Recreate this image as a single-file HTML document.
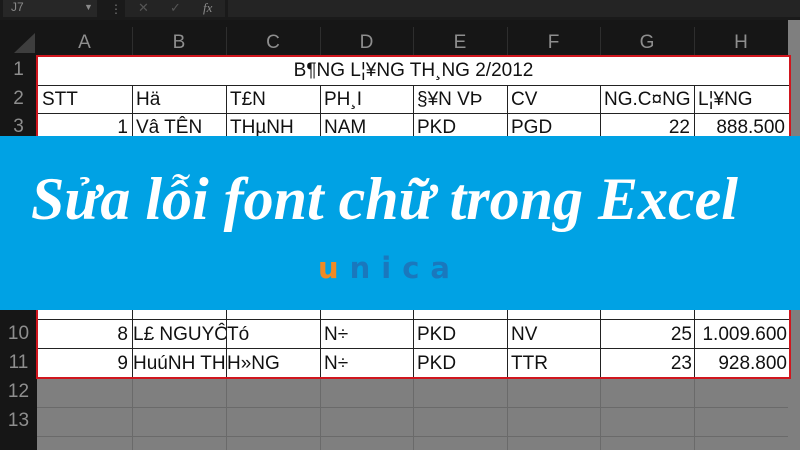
<!DOCTYPE html>
<html><head><meta charset="utf-8"><style>
*{margin:0;padding:0;box-sizing:border-box}
body{width:800px;height:450px;overflow:hidden;background:#1c1c1c;position:relative;font-family:"Liberation Sans",sans-serif}
.a{position:absolute}
.cell{position:absolute;font-size:19px;color:#111;white-space:nowrap;overflow:hidden;line-height:28px;padding:0 4px}
.hd{position:absolute;color:#8e8e8e;font-size:19px;text-align:center;line-height:28px}
</style></head><body>
<div class="a" style="left:0;top:0;width:800px;height:20px;background:#1a1a1a"></div>
<div class="a" style="left:3px;top:0;width:94px;height:17px;background:#272727;color:#8a8a8a;font-size:12px;padding-left:8px;line-height:15px">J7<span style="position:absolute;left:81px;top:0;font-size:9px">▼</span></div>
<div class="a" style="left:110px;top:2px;color:#777;font-size:12px">⋮</div>
<div class="a" style="left:125px;top:0;width:100px;height:17px;background:#242424;color:#555;font-size:13px;line-height:16px"><span style="position:absolute;left:13px">✕</span><span style="position:absolute;left:45px">✓</span><span style="position:absolute;left:78px;color:#8a8a8a;font-style:italic;font-family:'Liberation Serif',serif">fx</span></div>
<div class="a" style="left:228px;top:0;width:572px;height:17px;background:#242424"></div>
<div class="a" style="left:0;top:20px;width:800px;height:35px;background:#161616"></div>
<div class="a" style="left:14px;top:33px;width:0;height:0;border-left:21px solid transparent;border-bottom:20px solid #3e3e3e"></div>
<div class="hd" style="left:37px;top:29px;width:95px">A</div>
<div class="hd" style="left:132px;top:29px;width:94px">B</div>
<div class="hd" style="left:226px;top:29px;width:94px">C</div>
<div class="hd" style="left:320px;top:29px;width:93px">D</div>
<div class="hd" style="left:413px;top:29px;width:94px">E</div>
<div class="hd" style="left:507px;top:29px;width:93px">F</div>
<div class="hd" style="left:600px;top:29px;width:94px">G</div>
<div class="hd" style="left:694px;top:29px;width:94px">H</div>
<div class="a" style="left:132px;top:27px;width:1px;height:28px;background:#2e2e2e"></div>
<div class="a" style="left:226px;top:27px;width:1px;height:28px;background:#2e2e2e"></div>
<div class="a" style="left:320px;top:27px;width:1px;height:28px;background:#2e2e2e"></div>
<div class="a" style="left:413px;top:27px;width:1px;height:28px;background:#2e2e2e"></div>
<div class="a" style="left:507px;top:27px;width:1px;height:28px;background:#2e2e2e"></div>
<div class="a" style="left:600px;top:27px;width:1px;height:28px;background:#2e2e2e"></div>
<div class="a" style="left:694px;top:27px;width:1px;height:28px;background:#2e2e2e"></div>
<div class="a" style="left:0;top:55px;width:37px;height:395px;background:#161616"></div>
<div class="hd" style="left:0;top:56px;width:37px">1</div>
<div class="hd" style="left:0;top:85px;width:37px">2</div>
<div class="hd" style="left:0;top:113px;width:37px">3</div>
<div class="hd" style="left:0;top:320px;width:37px">10</div>
<div class="hd" style="left:0;top:349px;width:37px">11</div>
<div class="hd" style="left:0;top:378px;width:37px">12</div>
<div class="hd" style="left:0;top:407px;width:37px">13</div>
<div class="a" style="left:37px;top:378px;width:763px;height:72px;background:#7f7f7f"></div>
<div class="a" style="left:37px;top:407px;width:763px;height:1px;background:#6a6a6a"></div>
<div class="a" style="left:37px;top:436px;width:763px;height:1px;background:#6a6a6a"></div>
<div class="a" style="left:132px;top:378px;width:1px;height:72px;background:#6a6a6a"></div>
<div class="a" style="left:226px;top:378px;width:1px;height:72px;background:#6a6a6a"></div>
<div class="a" style="left:320px;top:378px;width:1px;height:72px;background:#6a6a6a"></div>
<div class="a" style="left:413px;top:378px;width:1px;height:72px;background:#6a6a6a"></div>
<div class="a" style="left:507px;top:378px;width:1px;height:72px;background:#6a6a6a"></div>
<div class="a" style="left:600px;top:378px;width:1px;height:72px;background:#6a6a6a"></div>
<div class="a" style="left:694px;top:378px;width:1px;height:72px;background:#6a6a6a"></div>
<div class="a" style="left:788px;top:20px;width:12px;height:430px;background:#7f7f7f"></div>
<div class="a" style="left:36px;top:55px;width:755px;height:324px;background:#fff;border:2px solid #d0161e"></div>
<div class="a" style="left:38px;top:85px;width:751px;height:1px;background:#222"></div>
<div class="a" style="left:38px;top:113px;width:751px;height:1px;background:#222"></div>
<div class="a" style="left:38px;top:319px;width:751px;height:1px;background:#222"></div>
<div class="a" style="left:38px;top:348px;width:751px;height:1px;background:#222"></div>
<div class="a" style="left:132px;top:85px;width:1px;height:292px;background:#222"></div>
<div class="a" style="left:226px;top:85px;width:1px;height:292px;background:#222"></div>
<div class="a" style="left:320px;top:85px;width:1px;height:292px;background:#222"></div>
<div class="a" style="left:413px;top:85px;width:1px;height:292px;background:#222"></div>
<div class="a" style="left:507px;top:85px;width:1px;height:292px;background:#222"></div>
<div class="a" style="left:600px;top:85px;width:1px;height:292px;background:#222"></div>
<div class="a" style="left:694px;top:85px;width:1px;height:292px;background:#222"></div>
<div class="cell" style="left:38px;top:57px;width:751px;text-align:center">B¶NG L¦¥NG TH¸NG 2/2012</div>
<div class="cell" style="left:38px;top:86px">STT</div>
<div class="cell" style="left:132px;top:86px">Hä</div>
<div class="cell" style="left:226px;top:86px">T£N</div>
<div class="cell" style="left:320px;top:86px">PH¸I</div>
<div class="cell" style="left:413px;top:86px">§¥N VÞ</div>
<div class="cell" style="left:507px;top:86px">CV</div>
<div class="cell" style="left:600px;top:86px">NG.C¤NG</div>
<div class="cell" style="left:694px;top:86px">L¦¥NG</div>
<div class="cell" style="left:38px;top:114px;width:94px;text-align:right">1</div>
<div class="cell" style="left:132px;top:114px">Vâ TÊN</div>
<div class="cell" style="left:226px;top:114px">THµNH</div>
<div class="cell" style="left:320px;top:114px">NAM</div>
<div class="cell" style="left:413px;top:114px">PKD</div>
<div class="cell" style="left:507px;top:114px">PGD</div>
<div class="cell" style="left:600px;top:114px;width:94px;text-align:right">22</div>
<div class="cell" style="left:694px;top:114px;width:95px;text-align:right">888.500</div>
<div class="cell" style="left:38px;top:321px;width:94px;text-align:right">8</div>
<div class="cell" style="left:132px;top:321px;width:94px;padding:0 1px">L£ NGUYÔN</div>
<div class="cell" style="left:226px;top:321px;padding:0 1px">Tó</div>
<div class="cell" style="left:320px;top:321px">N÷</div>
<div class="cell" style="left:413px;top:321px">PKD</div>
<div class="cell" style="left:507px;top:321px">NV</div>
<div class="cell" style="left:600px;top:321px;width:94px;text-align:right;padding-right:2px">25</div>
<div class="cell" style="left:694px;top:321px;width:95px;text-align:right;padding-right:2px">1.009.600</div>
<div class="cell" style="left:38px;top:350px;width:94px;text-align:right">9</div>
<div class="cell" style="left:132px;top:350px;width:94px;padding:0 1px">HuúNH TH</div>
<div class="cell" style="left:226px;top:350px;padding:0 1px">H»NG</div>
<div class="cell" style="left:320px;top:350px">N÷</div>
<div class="cell" style="left:413px;top:350px">PKD</div>
<div class="cell" style="left:507px;top:350px">TTR</div>
<div class="cell" style="left:600px;top:350px;width:94px;text-align:right;padding-right:2px">23</div>
<div class="cell" style="left:694px;top:350px;width:95px;text-align:right;padding-right:2px">928.800</div>
<div class="a" style="left:0;top:136px;width:800px;height:174px;background:#00a2e4"></div>
<div class="a" style="left:31px;top:162px;width:760px;color:#fff;font-family:'Liberation Serif',serif;font-style:italic;font-weight:bold;font-size:60px;line-height:74px;white-space:nowrap">Sửa lỗi font chữ trong Excel</div>
<div class="a" style="left:318px;top:250px;font-family:'DejaVu Sans',sans-serif;font-weight:bold;font-size:29px;letter-spacing:11px;color:#1a78bd;line-height:36px"><span style="color:#f08a24">u</span>nica</div>
</body></html>
